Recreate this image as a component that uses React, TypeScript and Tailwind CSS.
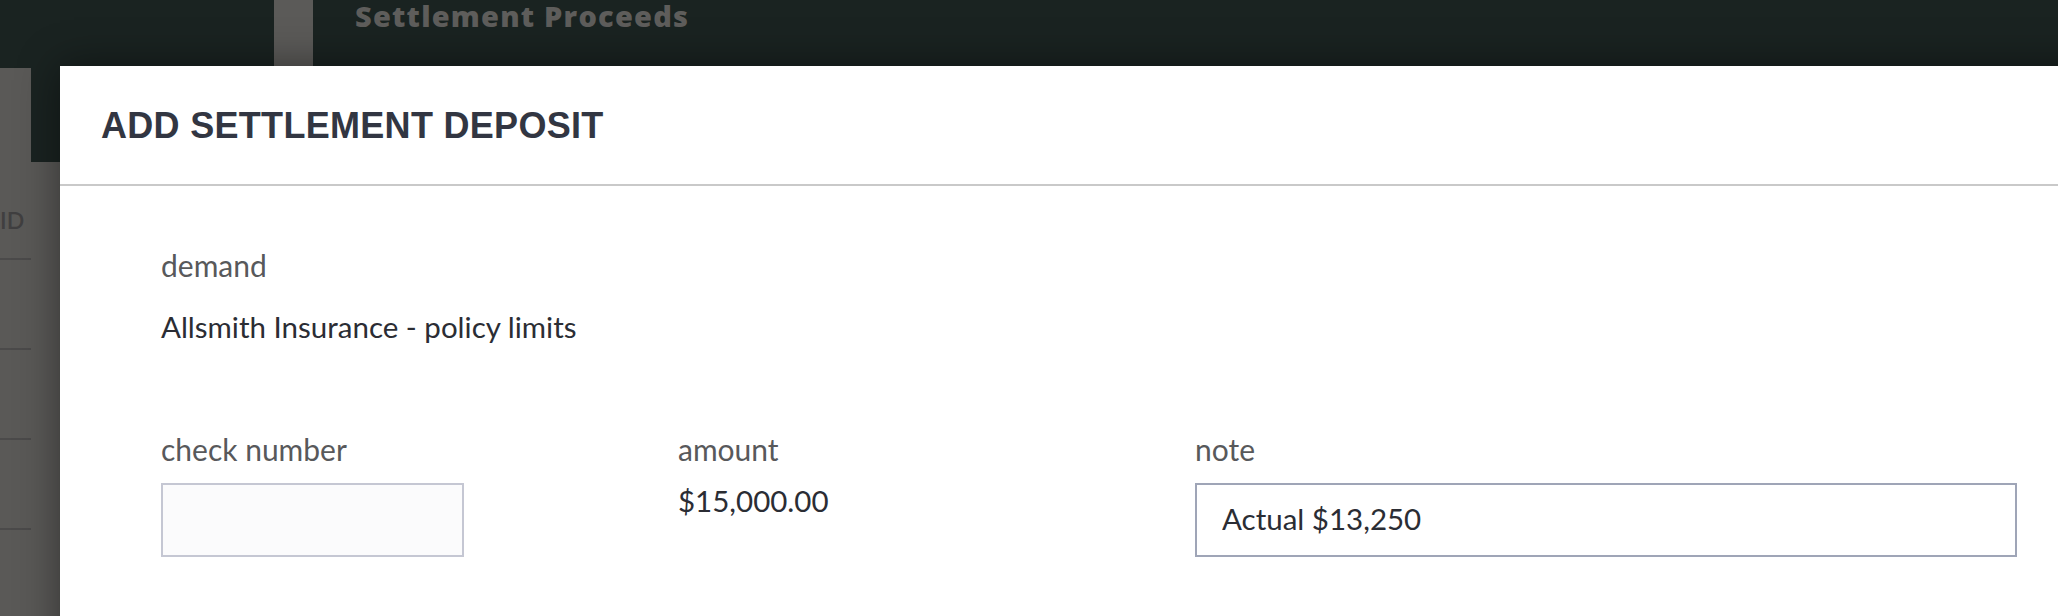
import React from 'react';

const sans = { fontFamily: 'Lato, "Open Sans", sans-serif' };

function Backdrop() {
  // dimmed page behind the modal
  return (
    <div className="flex h-full w-full flex-col bg-[#5a5957]">
      <div className="flex h-[68px] shrink-0">
        <div className="w-[274px] bg-[#1a2321]" />
        <div className="w-[39px] bg-[#5b5a58]" />
        <div
          className="flex-1 bg-[#1a2321] pl-[42px] text-[29px] font-extrabold leading-[36px] tracking-[1.2px] text-[#5e5d5b]"
          style={{ fontFamily: '"Open Sans", Lato, sans-serif' }}
        >
          <div className="-mt-[2px]">Settlement Proceeds</div>
        </div>
      </div>
      <div className="flex flex-1">
        <div className="w-[31px] shrink-0 overflow-hidden">
          <div className="h-[192px] border-b-2 border-[#4b4a4a] pt-[137px]">
            <div className="text-[23px] font-semibold leading-[30px] text-[#403f40]" style={sans}>
              ID
            </div>
          </div>
          <div className="h-[90px] border-b-2 border-[#4b4a4a]" />
          <div className="h-[90px] border-b-2 border-[#4b4a4a]" />
          <div className="h-[90px] border-b-2 border-[#4b4a4a]" />
        </div>
        <div className="h-[94px] w-[243px] bg-[#1a2321]" />
      </div>
    </div>
  );
}

function Field({ label, children, width }: { label: string; children: React.ReactNode; width: string }) {
  return (
    <div className={`${width} shrink-0`}>
      <div className="text-[30px] leading-[36px] text-[#58595b]">{label}</div>
      <div className="mt-[16px]">{children}</div>
    </div>
  );
}

export default function App() {
  return (
    <div className="relative h-[616px] w-[2058px] overflow-hidden" style={sans}>
      <Backdrop />

      <div className="absolute left-[60px] top-[66px] h-[700px] w-[2120px] bg-white shadow-[0_0_40px_rgba(0,0,0,0.45)]">
        <div className="border-b-2 border-[#c9c9c9] pb-[38px] pl-[41px] pt-[40px]">
          <h1
            className="text-[36px] font-bold leading-[40px] tracking-[0.3px] text-[#323642]"
            style={{ fontFamily: '"Liberation Sans", Arial, sans-serif' }}
          >
            ADD SETTLEMENT DEPOSIT
          </h1>
        </div>

        <div className="pl-[101px] pt-[61px]">
          <div className="text-[30px] leading-[36px] text-[#58595b]">demand</div>
          <div className="mt-[26px] text-[29.5px] leading-[36px] text-[#2b2d34]">
            Allsmith Insurance - policy limits
          </div>

          <div className="mt-[86px] flex">
            <Field label="check number" width="w-[517px]">
              <input
                className="box-border h-[74px] w-[303px] border-2 border-[#c5c7d3] bg-[#fbfbfc] px-[25px] text-[29.5px] outline-none"
                style={sans}
              />
            </Field>
            <Field label="amount" width="w-[517px]">
              <div className="text-[29.5px] leading-[36px] text-[#2b2d34]">$15,000.00</div>
            </Field>
            <Field label="note" width="w-[822px]">
              <input
                className="box-border h-[74px] w-[822px] border-2 border-[#9fa5b7] bg-white px-[25px] pb-[17px] pt-[13px] text-[29.5px] leading-[36px] text-[#2b2d34] outline-none"
                style={sans}
                defaultValue="Actual $13,250"
              />
            </Field>
          </div>
        </div>
      </div>
    </div>
  );
}
